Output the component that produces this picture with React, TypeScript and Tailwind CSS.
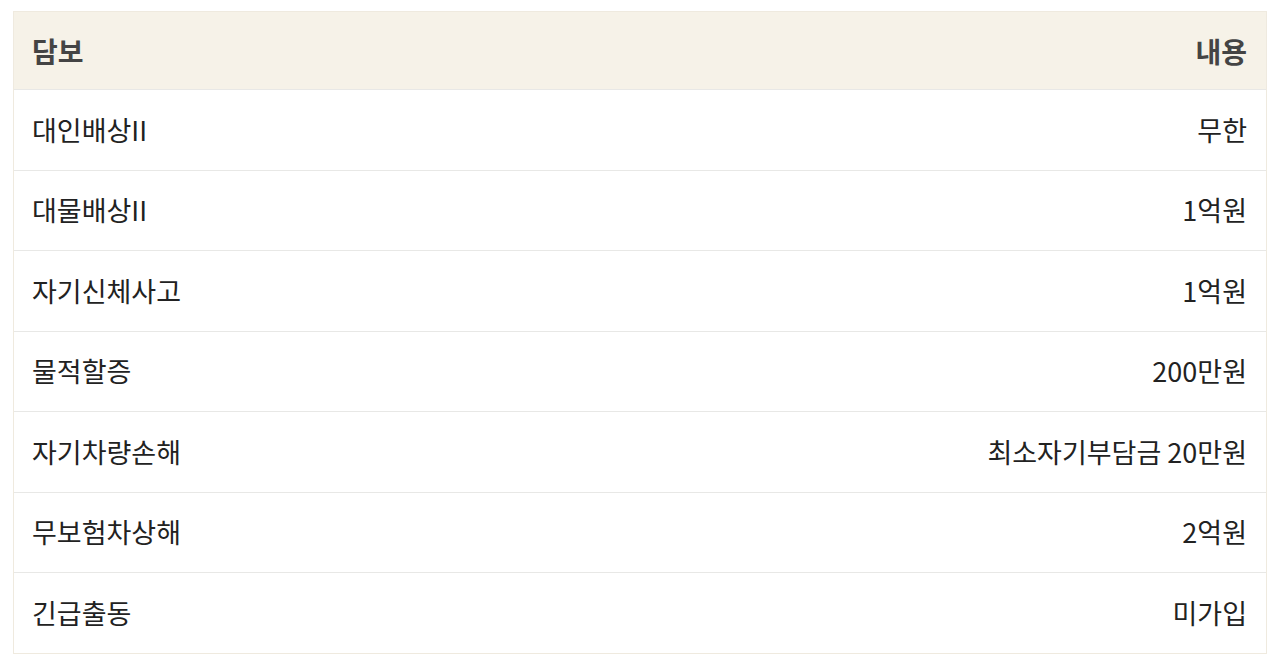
import React from "react";

const rows: [string, string][] = [
  ["대인배상II", "무한"],
  ["대물배상II", "1억원"],
  ["자기신체사고", "1억원"],
  ["물적할증", "200만원"],
  ["자기차량손해", "최소자기부담금 20만원"],
  ["무보험차상해", "2억원"],
  ["긴급출동", "미가입"],
];

export default function App() {
  return (
    <div
      className="w-[1280px] h-[667px] bg-white pl-[13px] pr-[13px] pt-[11px]"
      style={{ fontFamily: '"Noto Sans CJK KR", "Noto Sans", sans-serif' }}
    >
      <div className="border border-[#efeadf] w-[1254px]">
        <div className="flex h-[77px] items-center justify-between bg-[#f6f2e8] pl-[18px] pr-[19px] text-[28px] font-bold text-[#444]">
          <span>담보</span>
          <span>내용</span>
        </div>
        {rows.map(([a, b], i) => (
          <div
            key={i}
            className="flex h-[80.5px] items-center justify-between border-t border-[#e8e8e6] pl-[18px] pr-[19px] text-[27px] text-[#222]"
          >
            <span>{a}</span>
            <span>{b}</span>
          </div>
        ))}
      </div>
    </div>
  );
}
